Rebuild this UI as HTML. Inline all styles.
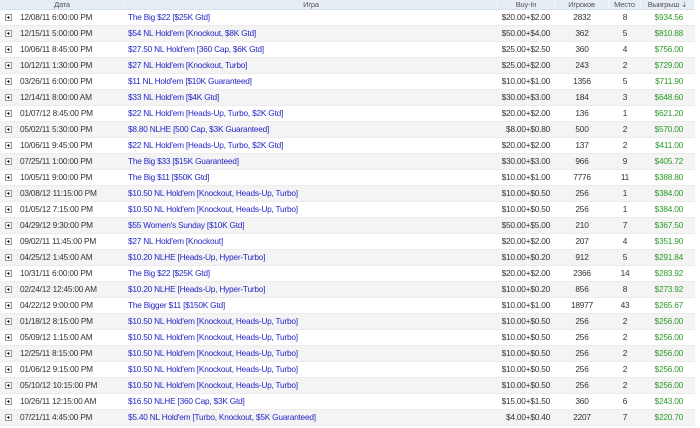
<!DOCTYPE html>
<html><head><meta charset="utf-8"><style>
html,body{margin:0;width:700px;height:428px;overflow:hidden}
body{background:#fff;font-family:"Liberation Sans",sans-serif;font-size:8.3px;letter-spacing:-0.22px;color:#333;position:relative}
.h,.r{position:absolute;left:0;width:695px;display:flex;box-sizing:border-box}
.h{top:0;height:10px;line-height:10px;background:#e6edf5;color:#555;font-size:7.5px;letter-spacing:-0.2px;border-bottom:1px solid #d8e0ea}
.h div{border-right:1px solid #f4f7fa;text-align:center;box-sizing:border-box}
.r{height:16px;line-height:15px;border-bottom:1px solid #ececec}
.r:nth-child(odd){background:#f4f4f4}
.r div,.h div{white-space:nowrap;overflow:hidden;flex:none}
.a{width:125px}.g{width:373px}.b{width:57px}.n{width:54px}.m{width:32px}.w{width:54px}
.p{display:inline-block;width:5px;height:5px;border:1px solid #999;background:#fff;position:relative;margin:0 8px 0 5px;vertical-align:-1px}
.p:before{content:"";position:absolute;left:1px;top:2px;width:3px;height:1px;background:#444}
.p:after{content:"";position:absolute;left:2px;top:1px;width:1px;height:3px;background:#444}
.r .g{color:#2525c8;padding-left:3px;box-sizing:border-box}
.r .b{text-align:right;padding-right:5px;box-sizing:border-box}
.r .n,.r .m{text-align:center}
.r .w{text-align:right;padding-right:12px;color:#2a9a2a;box-sizing:border-box}
</style></head><body>
<div class="h"><div class="a">Дата</div><div class="g">Игра</div><div class="b">Buy-In</div><div class="n">Игроков</div><div class="m">Место</div><div class="w">Выигрыш ⇣</div></div>
<div class="r" style="top:10px"><div class="a"><span class="p"></span>12/08/11 6:00:00 PM</div><div class="g">The Big $22 [$25K Gtd]</div><div class="b">$20.00+$2.00</div><div class="n">2832</div><div class="m">8</div><div class="w">$934.56</div></div>
<div class="r" style="top:26px"><div class="a"><span class="p"></span>12/15/11 5:00:00 PM</div><div class="g">$54 NL Hold'em [Knockout, $8K Gtd]</div><div class="b">$50.00+$4.00</div><div class="n">362</div><div class="m">5</div><div class="w">$810.88</div></div>
<div class="r" style="top:42px"><div class="a"><span class="p"></span>10/06/11 8:45:00 PM</div><div class="g">$27.50 NL Hold'em [360 Cap, $6K Gtd]</div><div class="b">$25.00+$2.50</div><div class="n">360</div><div class="m">4</div><div class="w">$756.00</div></div>
<div class="r" style="top:58px"><div class="a"><span class="p"></span>10/12/11 1:30:00 PM</div><div class="g">$27 NL Hold'em [Knockout, Turbo]</div><div class="b">$25.00+$2.00</div><div class="n">243</div><div class="m">2</div><div class="w">$729.00</div></div>
<div class="r" style="top:74px"><div class="a"><span class="p"></span>03/26/11 6:00:00 PM</div><div class="g">$11 NL Hold'em [$10K Guaranteed]</div><div class="b">$10.00+$1.00</div><div class="n">1356</div><div class="m">5</div><div class="w">$711.90</div></div>
<div class="r" style="top:90px"><div class="a"><span class="p"></span>12/14/11 8:00:00 AM</div><div class="g">$33 NL Hold'em [$4K Gtd]</div><div class="b">$30.00+$3.00</div><div class="n">184</div><div class="m">3</div><div class="w">$648.60</div></div>
<div class="r" style="top:106px"><div class="a"><span class="p"></span>01/07/12 8:45:00 PM</div><div class="g">$22 NL Hold'em [Heads-Up, Turbo, $2K Gtd]</div><div class="b">$20.00+$2.00</div><div class="n">136</div><div class="m">1</div><div class="w">$621.20</div></div>
<div class="r" style="top:122px"><div class="a"><span class="p"></span>05/02/11 5:30:00 PM</div><div class="g">$8.80 NLHE [500 Cap, $3K Guaranteed]</div><div class="b">$8.00+$0.80</div><div class="n">500</div><div class="m">2</div><div class="w">$570.00</div></div>
<div class="r" style="top:138px"><div class="a"><span class="p"></span>10/06/11 9:45:00 PM</div><div class="g">$22 NL Hold'em [Heads-Up, Turbo, $2K Gtd]</div><div class="b">$20.00+$2.00</div><div class="n">137</div><div class="m">2</div><div class="w">$411.00</div></div>
<div class="r" style="top:154px"><div class="a"><span class="p"></span>07/25/11 1:00:00 PM</div><div class="g">The Big $33 [$15K Guaranteed]</div><div class="b">$30.00+$3.00</div><div class="n">966</div><div class="m">9</div><div class="w">$405.72</div></div>
<div class="r" style="top:170px"><div class="a"><span class="p"></span>10/05/11 9:00:00 PM</div><div class="g">The Big $11 [$50K Gtd]</div><div class="b">$10.00+$1.00</div><div class="n">7776</div><div class="m">11</div><div class="w">$388.80</div></div>
<div class="r" style="top:186px"><div class="a"><span class="p"></span>03/08/12 11:15:00 PM</div><div class="g">$10.50 NL Hold'em [Knockout, Heads-Up, Turbo]</div><div class="b">$10.00+$0.50</div><div class="n">256</div><div class="m">1</div><div class="w">$384.00</div></div>
<div class="r" style="top:202px"><div class="a"><span class="p"></span>01/05/12 7:15:00 PM</div><div class="g">$10.50 NL Hold'em [Knockout, Heads-Up, Turbo]</div><div class="b">$10.00+$0.50</div><div class="n">256</div><div class="m">1</div><div class="w">$384.00</div></div>
<div class="r" style="top:218px"><div class="a"><span class="p"></span>04/29/12 9:30:00 PM</div><div class="g">$55 Women's Sunday [$10K Gtd]</div><div class="b">$50.00+$5.00</div><div class="n">210</div><div class="m">7</div><div class="w">$367.50</div></div>
<div class="r" style="top:234px"><div class="a"><span class="p"></span>09/02/11 11:45:00 PM</div><div class="g">$27 NL Hold'em [Knockout]</div><div class="b">$20.00+$2.00</div><div class="n">207</div><div class="m">4</div><div class="w">$351.90</div></div>
<div class="r" style="top:250px"><div class="a"><span class="p"></span>04/25/12 1:45:00 AM</div><div class="g">$10.20 NLHE [Heads-Up, Hyper-Turbo]</div><div class="b">$10.00+$0.20</div><div class="n">912</div><div class="m">5</div><div class="w">$291.84</div></div>
<div class="r" style="top:266px"><div class="a"><span class="p"></span>10/31/11 6:00:00 PM</div><div class="g">The Big $22 [$25K Gtd]</div><div class="b">$20.00+$2.00</div><div class="n">2366</div><div class="m">14</div><div class="w">$283.92</div></div>
<div class="r" style="top:282px"><div class="a"><span class="p"></span>02/24/12 12:45:00 AM</div><div class="g">$10.20 NLHE [Heads-Up, Hyper-Turbo]</div><div class="b">$10.00+$0.20</div><div class="n">856</div><div class="m">8</div><div class="w">$273.92</div></div>
<div class="r" style="top:298px"><div class="a"><span class="p"></span>04/22/12 9:00:00 PM</div><div class="g">The Bigger $11 [$150K Gtd]</div><div class="b">$10.00+$1.00</div><div class="n">18977</div><div class="m">43</div><div class="w">$265.67</div></div>
<div class="r" style="top:314px"><div class="a"><span class="p"></span>01/18/12 8:15:00 PM</div><div class="g">$10.50 NL Hold'em [Knockout, Heads-Up, Turbo]</div><div class="b">$10.00+$0.50</div><div class="n">256</div><div class="m">2</div><div class="w">$256.00</div></div>
<div class="r" style="top:330px"><div class="a"><span class="p"></span>05/09/12 1:15:00 AM</div><div class="g">$10.50 NL Hold'em [Knockout, Heads-Up, Turbo]</div><div class="b">$10.00+$0.50</div><div class="n">256</div><div class="m">2</div><div class="w">$256.00</div></div>
<div class="r" style="top:346px"><div class="a"><span class="p"></span>12/25/11 8:15:00 PM</div><div class="g">$10.50 NL Hold'em [Knockout, Heads-Up, Turbo]</div><div class="b">$10.00+$0.50</div><div class="n">256</div><div class="m">2</div><div class="w">$256.00</div></div>
<div class="r" style="top:362px"><div class="a"><span class="p"></span>01/06/12 9:15:00 PM</div><div class="g">$10.50 NL Hold'em [Knockout, Heads-Up, Turbo]</div><div class="b">$10.00+$0.50</div><div class="n">256</div><div class="m">2</div><div class="w">$256.00</div></div>
<div class="r" style="top:378px"><div class="a"><span class="p"></span>05/10/12 10:15:00 PM</div><div class="g">$10.50 NL Hold'em [Knockout, Heads-Up, Turbo]</div><div class="b">$10.00+$0.50</div><div class="n">256</div><div class="m">2</div><div class="w">$256.00</div></div>
<div class="r" style="top:394px"><div class="a"><span class="p"></span>10/26/11 12:15:00 AM</div><div class="g">$16.50 NLHE [360 Cap, $3K Gtd]</div><div class="b">$15.00+$1.50</div><div class="n">360</div><div class="m">6</div><div class="w">$243.00</div></div>
<div class="r" style="top:410px"><div class="a"><span class="p"></span>07/21/11 4:45:00 PM</div><div class="g">$5.40 NL Hold'em [Turbo, Knockout, $5K Guaranteed]</div><div class="b">$4.00+$0.40</div><div class="n">2207</div><div class="m">7</div><div class="w">$220.70</div></div>
</body></html>
